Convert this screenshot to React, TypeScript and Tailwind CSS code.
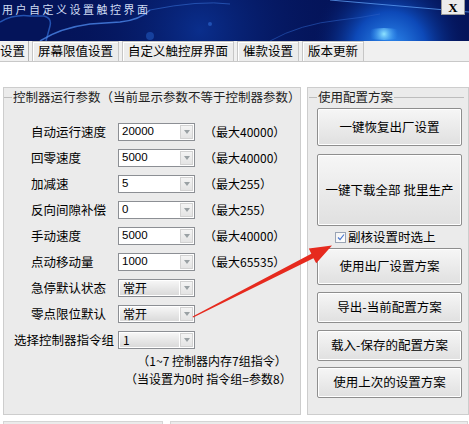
import React from 'react';

type Row = { label: string; value: string; note?: string; select?: boolean };

const rows: Row[] = [
  { label: '自动运行速度', value: '20000', note: '（最大40000）' },
  { label: '回零速度', value: '5000', note: '（最大40000）' },
  { label: '加减速', value: '5', note: '（最大255）' },
  { label: '反向间隙补偿', value: '0', note: '（最大255）' },
  { label: '手动速度', value: '5000', note: '（最大40000）' },
  { label: '点动移动量', value: '1000', note: '（最大65535）' },
  { label: '急停默认状态', value: '常开', select: true },
  { label: '零点限位默认', value: '常开', select: true },
];

const tabs = ['屏幕限值设置', '自定义触控屏界面', '催款设置', '版本更新'];

const Combo: React.FC<{ value: string; select?: boolean }> = ({ value, select }) => (
  <div className="w-[77px] h-[18px] border border-[#8c8f94] bg-white flex p-px">
    <div
      className={
        select
          ? 'flex-1 flex items-center pl-[3px] text-[12px] text-black bg-gradient-to-b from-[#f6f6f6] to-[#dadada]'
          : "flex-1 flex items-center pl-[2px] text-[11.5px] text-black font-['Liberation_Sans',sans-serif]"
      }
    >
      {value}
    </div>
    <div className="w-[13px] ml-px border border-[#d2d2d2] bg-gradient-to-b from-[#f4f4f4] to-[#e4e4e4] flex items-center justify-center">
      <svg width="6" height="4" viewBox="0 0 6 4">
        <path d="M0 0h6L3 4z" fill="#9aa1a4" />
      </svg>
    </div>
  </div>
);

const Btn: React.FC<{ h: string; children: React.ReactNode }> = ({ h, children }) => (
  <div
    className={`${h} w-[145px] border border-[#8e8e8e] rounded-[2px] bg-gradient-to-b from-[#f6f6f6] to-[#e0e0e0] shadow-[inset_0_0_0_1px_#ffffff] flex items-center justify-center text-[12.5px] text-black`}
  >
    {children}
  </div>
);

export default function App() {
  return (
    <div className="relative w-[469px] h-[424px] overflow-hidden bg-white font-['Noto_Sans_CJK_SC','Noto_Sans',sans-serif] text-black">
      {/* title bar */}
      <div className="relative h-[41px] bg-[#04145a] overflow-hidden flex justify-between">
        <svg className="absolute inset-0" width="469" height="41" viewBox="0 0 469 41">
          <defs>
            <radialGradient id="g1" cx="390" cy="48" r="80" gradientUnits="userSpaceOnUse">
              <stop offset="0" stopColor="#2f8cf0" />
              <stop offset="0.45" stopColor="#0d49b8" />
              <stop offset="1" stopColor="#04145a" stopOpacity="0" />
            </radialGradient>
            <radialGradient id="g2" cx="200" cy="30" r="140" gradientUnits="userSpaceOnUse">
              <stop offset="0" stopColor="#0a2e8c" />
              <stop offset="1" stopColor="#04145a" stopOpacity="0" />
            </radialGradient>
            <radialGradient id="g3" cx="384" cy="34" r="14" gradientUnits="userSpaceOnUse">
              <stop offset="0" stopColor="#8fe4ff" />
              <stop offset="1" stopColor="#3aa0ff" stopOpacity="0" />
            </radialGradient>
          </defs>
          <rect width="469" height="41" fill="url(#g2)" />
          <rect width="469" height="41" fill="url(#g1)" />
          <ellipse cx="384" cy="34" rx="22" ry="6" fill="url(#g3)" />
          <path d="M0 22 Q14 14 30 16 L44 16 Q52 18 50 26 L46 41" stroke="#2c63c8" strokeWidth="1.5" fill="none" opacity="0.8" />
          <path d="M40 41 Q60 28 90 24 L120 22 Q140 20 150 10" stroke="#4b86e8" strokeWidth="1.5" fill="none" opacity="0.8" />
          <path d="M150 10 Q200 0 230 4" stroke="#2f63c4" strokeWidth="1" fill="none" opacity="0.7" />
          <path d="M270 41 Q300 24 340 20 Q360 18 380 14" stroke="#2a5cc0" strokeWidth="1" fill="none" opacity="0.6" />
          <path d="M330 0 L469 12" stroke="#5b9af0" strokeWidth="1" fill="none" opacity="0.8" />
          <circle cx="150" cy="36" r="4" fill="#1c4fb0" opacity="0.7" />
          <circle cx="210" cy="24" r="2" fill="#2e6ad4" opacity="0.6" />
        </svg>
        <div className="relative pl-[2px] pt-[1px] text-[11px] tracking-[2.5px] text-[#cfdcf4] font-['Noto_Sans_CJK_SC',sans-serif] h-[16px] leading-[16px]">
          用户自定义设置触控界面
        </div>
        <div className="relative mr-[4px] w-[24px] h-[15px] bg-[#ececec] border border-[#9a9a9a] border-t-0 flex items-center justify-center text-[13px] font-bold font-['Liberation_Serif',serif] leading-none">
          X
        </div>
      </div>

      {/* tabs */}
      <div className="h-[21px] bg-[#f0f0f0] border-b border-[#c8c8c8] flex items-stretch gap-[3px] text-[12.5px]">
        <div className="pr-[3px] border-r border-[#b4b4b4] flex items-center leading-none">设置</div>
        {tabs.map((t) => (
          <div
            key={t}
            className="px-[5px] border-x border-t border-[#c6c6c6] bg-[#ececec] shadow-[inset_1px_1px_0_#ffffff] flex items-center leading-none"
          >
            {t}
          </div>
        ))}
      </div>

      <div className="h-[25px]" />

      {/* body */}
      <div className="flex gap-[6px] pl-[3px]">
        {/* left group */}
        <div className="w-[298px] h-[328px] bg-[#ebebeb] border border-[#cdcdcd] pt-[1px]">
          <div className="flex items-center h-[16px] text-[12.5px] text-[#222]">
            <div className="w-[8px] h-px bg-[#bdbdbd]" />
            <span className="px-px">控制器运行参数（当前显示参数不等于控制器参数）</span>
            <div className="flex-1 h-px bg-[#bdbdbd] mr-[2px]" />
          </div>
          <div className="pt-[18px] flex flex-col gap-[8px]">
            {rows.map((r) => (
              <div key={r.label} className="flex items-center h-[18px]">
                <div className="w-[114px] pl-[27px] text-[12.5px] leading-none">{r.label}</div>
                <Combo value={r.value} select={r.select} />
                {r.note && <div className="pl-[9px] text-[12px] leading-none">{r.note}</div>}
              </div>
            ))}
            <div className="flex items-center h-[18px]">
              <div className="w-[114px] pl-[10px] text-[12.5px] leading-none">选择控制器指令组</div>
              <Combo value="1" select />
            </div>
          </div>
          <div className="pt-[3px] pl-[121px] text-[12px] leading-[18px] text-center w-[287px]">
            <div className="pl-[8px]">（1~7 控制器内存7组指令）</div>
            <div>（当设置为0时 指令组=参数8）</div>
          </div>
        </div>

        {/* right group */}
        <div className="w-[162px] h-[328px] bg-[#ebebeb] border border-[#cdcdcd] pt-[1px] pl-[9px]">
          <div className="flex items-center h-[16px] text-[12.5px] text-[#222] -ml-[8px]">
            <div className="w-[8px] h-px bg-[#bdbdbd]" />
            <span className="px-px">使用配置方案</span>
            <div className="flex-1 h-px bg-[#bdbdbd] mr-[4px]" />
          </div>
          <div className="flex flex-col pt-[3px]">
            <Btn h="h-[38px]">一键恢复出厂设置</Btn>
            <div className="h-[8px]" />
            <Btn h="h-[72px]">一键下载全部 批里生产</Btn>
            <div className="h-[22px] flex items-center pl-[18px] gap-[2px]">
              <div className="w-[11px] h-[11px] border border-[#9aa4b4] bg-gradient-to-br from-[#f4f4f4] to-white flex items-center justify-center">
                <svg width="8" height="8" viewBox="0 0 8 8">
                  <path d="M1 4.5 L3 6.5 L7 1.5" stroke="#4a78d0" strokeWidth="1.2" fill="none" />
                </svg>
              </div>
              <span className="text-[12.5px] leading-none">副核设置时选上</span>
            </div>
            <Btn h="h-[37px]">使用出厂设置方案</Btn>
            <div className="h-[7px]" />
            <Btn h="h-[31px]">导出-当前配置方案</Btn>
            <div className="h-[7px]" />
            <Btn h="h-[31px]">载入-保存的配置方案</Btn>
            <div className="h-[6px]" />
            <Btn h="h-[31px]">使用上次的设置方案</Btn>
          </div>
        </div>
      </div>

      {/* next row (cut) */}
      <div className="flex gap-[7px] pl-[3px] mt-[6px]">
        <div className="w-[160px] h-[10px] bg-[#ebebeb] border border-[#d5d5d5]" />
        <div className="w-[298px] h-[10px] bg-[#ebebeb] border border-[#d5d5d5]" />
      </div>

      {/* annotation arrow */}
      <svg className="absolute left-0 top-0 pointer-events-none" width="469" height="424" viewBox="0 0 469 424">
        <polygon
          points="192.6,316.4 311.3,253.8 308.8,248.6 332,245.5 316.2,263.3 313.5,258.2 193.2,317.6"
          fill="#e62a1e"
        />
      </svg>
    </div>
  );
}
